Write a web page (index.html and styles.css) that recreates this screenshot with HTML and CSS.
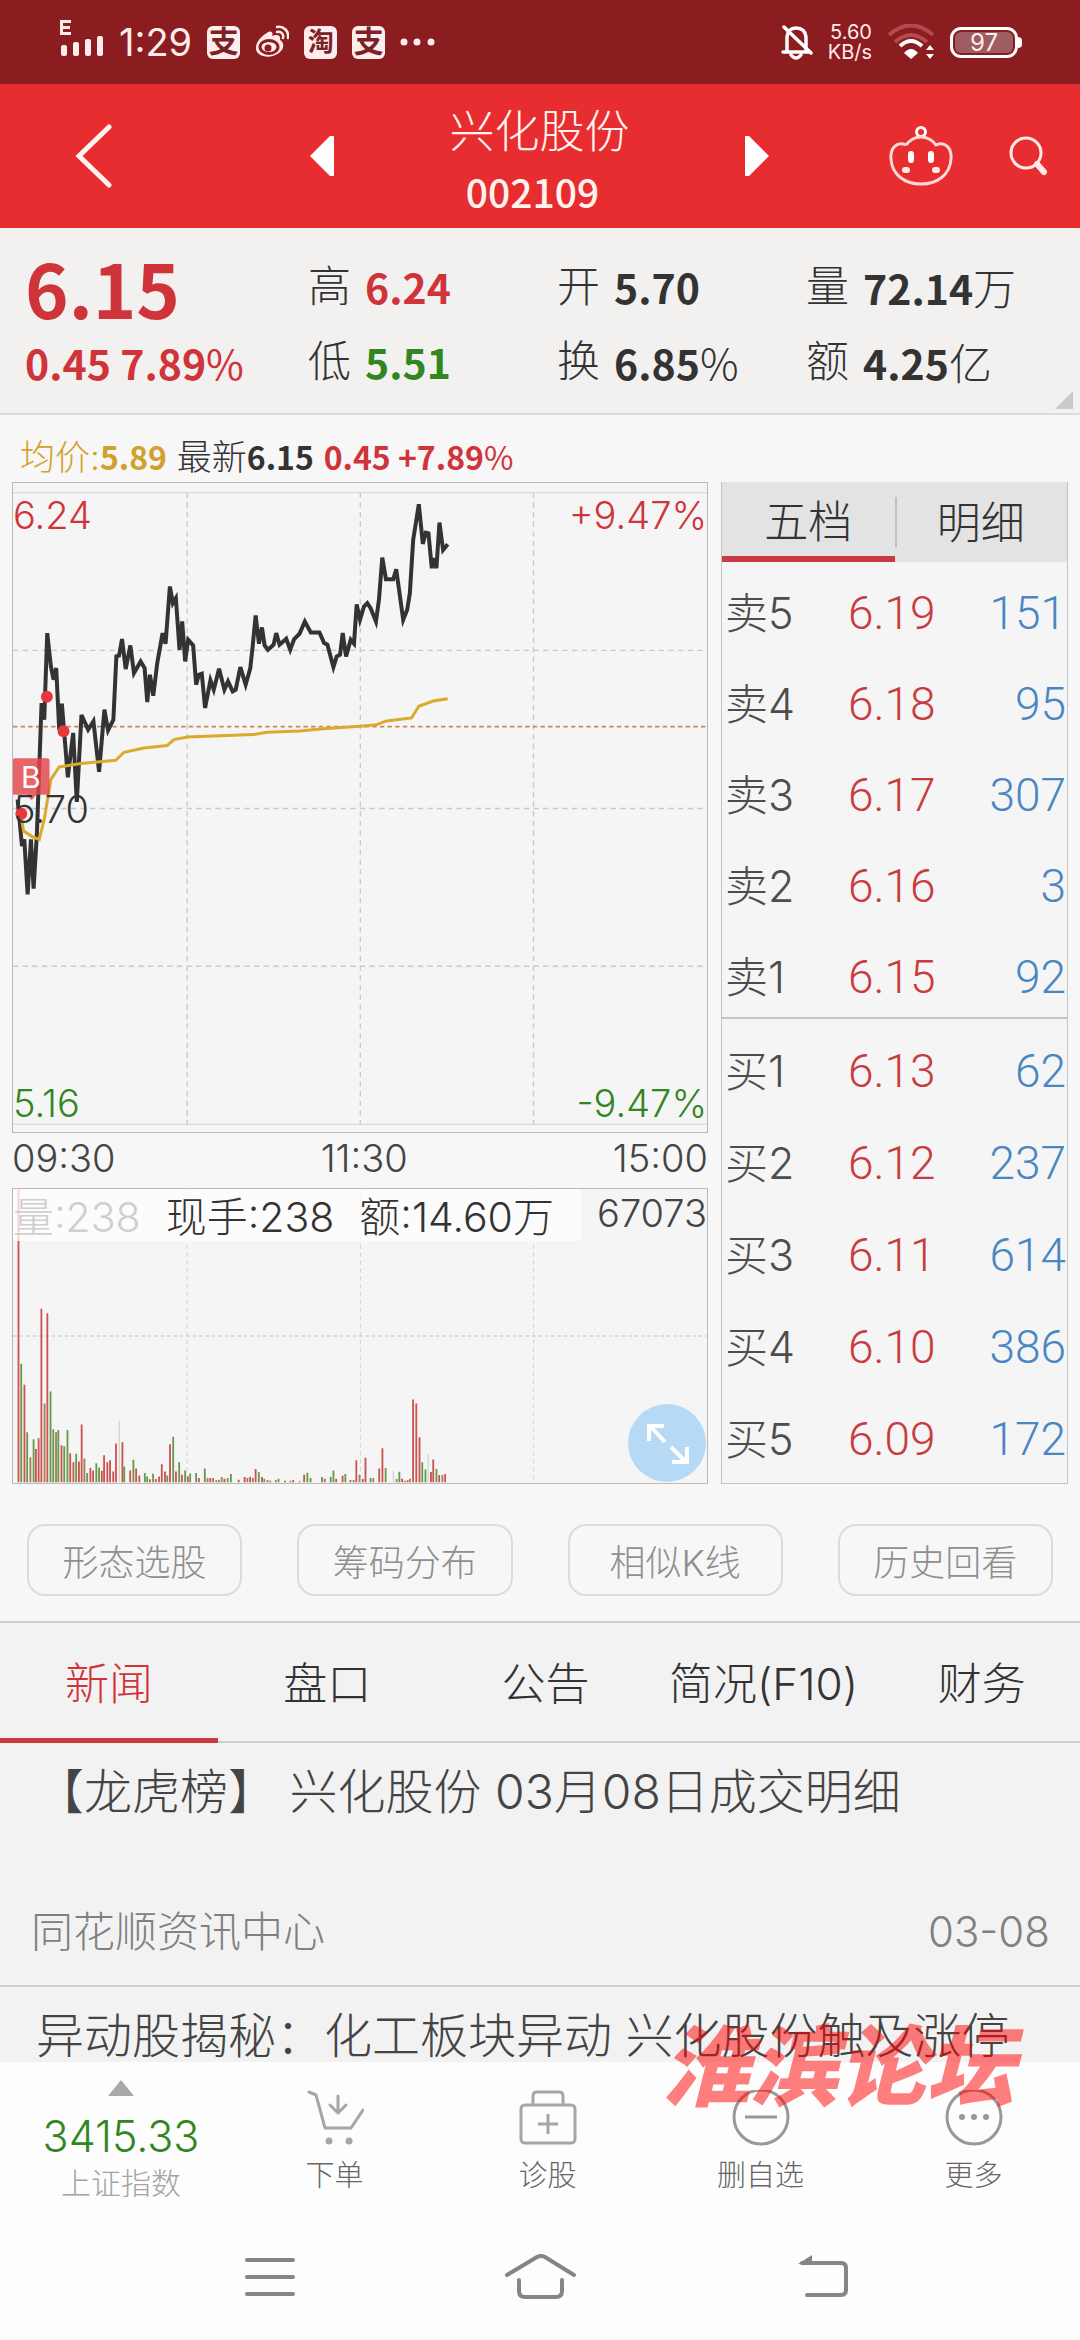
FILE: index.html
```html
<!DOCTYPE html>
<html lang="zh-CN">
<head>
<meta charset="utf-8">
<meta name="viewport" content="width=device-width">
<title>兴化股份 002109</title>
<link rel="stylesheet" href="styles.css">
</head>
<body>
<div class="app">
  <div class="status">
    <svg class="signal" viewBox="0 0 44 38" width="44" height="38" fill="#ffecec"><path d="M0 0h11v3H3v3h7v3H3v3h8v3H0z"/><rect x="1" y="25" width="6" height="11" rx="2"/><rect x="13" y="22" width="6" height="14" rx="2"/><rect x="25" y="19" width="6" height="17" rx="2"/><rect x="37" y="16" width="6" height="20" rx="2"/></svg>
    <span class="clock">1:29</span>
    <span class="app-badge">支</span>
    <svg viewBox="0 0 34 34" width="34" height="34"><path d="M12 8c3-3 7-1 5 3 5-2 9-1 8 4 5 3 4 9-1 13-7 5-18 5-22-1-4-7 4-16 10-19z" fill="#ffecec"/><ellipse cx="14" cy="22" rx="9" ry="6.500" fill="none" stroke="#8b1c1f" stroke-width="3"/><circle cx="13" cy="23" r="3.500" fill="#8b1c1f"/><path d="M22 7c4-1 7 2 6 6M22 2c7-1 12 4 11 11" fill="none" stroke="#ffecec" stroke-width="2.500" stroke-linecap="round"/></svg>
    <span class="app-badge small">淘</span>
    <span class="app-badge">支</span>
    <svg viewBox="0 0 36 8" width="36" height="8" fill="#ffecec"><circle cx="4" cy="4" r="3.500"/><circle cx="17" cy="4" r="3.500"/><circle cx="31" cy="4" r="3.500"/></svg>
    <span class="grow"></span>
    <svg viewBox="0 0 32 36" width="32" height="36" fill="none" stroke="#fff" stroke-width="3.500" stroke-linecap="round"><path d="M6 27V13Q7 4 15 4Q24 4 25 13V27M2 28H29M10 31Q15 37 20 31"/><path d="M3 3L30 29"/></svg>
    <span class="speed"><span>5.60</span><span>KB/s</span></span>
    <svg viewBox="0 0 48 36" width="48" height="36"><path d="M2 11Q24-8 46 11M8 18Q24 4 40 18" fill="none" stroke="#b5494d" stroke-width="4"/><path d="M13 22Q24 12 35 22" fill="none" stroke="#fff" stroke-width="4"/><path d="M17 29Q24 21 31 29L24 35zM43 21l4 5h-8zM43 35l4-5h-8z" fill="#fff"/></svg>
    <span class="battery">97</span>
  </div>

  <header class="header">
    <button class="icon-btn back" aria-label="返回"><svg viewBox="0 0 38 64" width="38" height="64" fill="none" stroke="#fff3f0" stroke-width="5" stroke-linecap="round"><path d="M34 3L4 32L34 61"/></svg></button>
    <div class="switcher">
      <button class="icon-btn" aria-label="上一只"><svg viewBox="0 0 24 40" width="24" height="40"><path d="M24 0V40H20L0 20L20 0z" fill="#fff"/></svg></button>
      <h1 class="stock"><span class="stock-name">兴化股份</span><span class="stock-code">002109</span></h1>
      <button class="icon-btn" aria-label="下一只"><svg viewBox="0 0 24 40" width="24" height="40"><path d="M0 0V40H4L24 20L4 0z" fill="#fff"/></svg></button>
    </div>
    <div class="tools">
      <button class="icon-btn" aria-label="智能助手"><svg viewBox="0 0 64 62" width="64" height="62" fill="none" stroke="#ffd9d6" stroke-width="3"><circle cx="32" cy="7" r="4.500" stroke="#fff" stroke-width="3"/><path d="M17 20Q23 12 32 12Q41 12 47 20C56 16 63 23 62 34C61 50 48 59 32 59C16 59 3 50 2 34C1 23 8 16 17 20"/><path d="M22 29v6M42 29v6" stroke="#fff" stroke-width="6" stroke-linecap="round"/><path d="M16 45h2M46 45h2" stroke="#ffe9e6" stroke-width="6" stroke-linecap="round"/></svg></button>
      <button class="icon-btn" aria-label="搜索"><svg viewBox="0 0 40 40" width="40" height="40" fill="none" stroke="#ffe9e6" stroke-width="3"><circle cx="18" cy="17" r="15"/><path d="M29 28L36 36" stroke-width="6" stroke-linecap="round"/></svg></button>
    </div>
  </header>

  <main class="content">
    <section class="quote">
      <div class="price-block"><strong class="price">6.15</strong><span class="num up">0.45 7.89<i>%</i></span></div>
      <dl class="stats">
        <div><dt>高</dt><dd class="up">6.24</dd></div>
        <div><dt>开</dt><dd>5.70</dd></div>
        <div><dt>量</dt><dd>72.14<i>万</i></dd></div>
        <div><dt>低</dt><dd class="down">5.51</dd></div>
        <div><dt>换</dt><dd>6.85<i>%</i></dd></div>
        <div><dt>额</dt><dd>4.25<i>亿</i></dd></div>
      </dl>
    </section>

    <p class="summary"><span class="avg">均价:<b>5.89</b></span> <span>最新<b>6.15</b></span> <b class="up">0.45 +7.89<i>%</i></b></p>

    <div class="market">
      <div class="charts">
        <div class="price-chart">
          <svg viewBox="36 9 2088 1950" preserveAspectRatio="none" fill="none">
            <g stroke="#c9c9c9" stroke-width="4" stroke-dasharray="16 13"><path d="M560 38V1936M1081 38V1936M1602 38V1936M36 512H2124M36 987H2124M36 1461H2124"/></g>
            <path d="M36 38H2124M36 1936H2124" stroke="#d2d2d2" stroke-width="3"/>
            <path d="M36 741H2124" stroke="#c98a5a" stroke-width="5" stroke-dasharray="13 10"/>
            <polyline stroke="#333" stroke-width="12" points="50,960 63,1100 70,1080 80,1245 90,1080 98,1228 108,1060 122,670 130,720 139,460 150,560 158,600 166,565 175,750 183,672 201,893 217,760 228,967 242,706 262,750 278,725 295,877 311,690 322,752 338,720 347,530 355,528 364,478 375,568 389,497 400,580 420,545 432,565 440,667 448,585 458,648 470,550 486,460 495,492 508,320 517,370 526,355 537,510 545,425 554,545 563,480 578,497 587,615 595,585 604,582 614,685 630,602 640,630 656,567 672,630 683,605 697,635 706,630 720,562 736,615 750,565 757,500 766,407 776,492 785,443 793,497 803,510 820,495 828,460 838,495 858,477 870,510 882,478 898,462 914,425 932,458 958,458 972,490 982,495 1000,562 1010,530 1020,525 1028,460 1038,530 1052,480 1062,492 1070,374 1080,420 1092,380 1102,370 1112,385 1128,425 1137,360 1147,233 1158,298 1180,298 1189,268 1210,420 1222,390 1230,340 1240,180 1257,73 1269,192 1278,158 1286,160 1296,265 1302,235 1310,265 1319,128 1330,210 1344,193"/>
            <polyline stroke="#dba92c" stroke-width="9" points="58,1000 68,1055 95,1072 115,1080 130,1020 150,900 175,862 240,852 345,842 370,818 430,805 500,798 520,780 560,772 760,765 800,758 900,754 960,748 1080,740 1130,735 1160,724 1235,715 1257,680 1300,664 1344,657"/>
            <g fill="#e8363d"><circle cx="138" cy="651" r="18"/><circle cx="188" cy="755" r="18"/><circle cx="61" cy="1003" r="18"/></g>
            <path d="M42 836H138q8 0 8 8V938q0 8-8 8H106L92 962L78 946H42q-8 0-8-8V844q0-8 8-8z" fill="#e4454b" fill-opacity=".82"/>
          </svg>
          <span class="tag tag-tl up">6.24</span>
          <span class="tag tag-tr up">+9.47%</span>
          <span class="tag tag-mid">5.70</span>
          <span class="tag tag-bl down">5.16</span>
          <span class="tag tag-br down">-9.47%</span>
          <span class="buy-mark">B</span>
        </div>
        <div class="times"><span>09:30</span><span>11:30</span><span>15:00</span></div>
        <div class="volume-chart">
          <svg viewBox="26 327 1516 888" preserveAspectRatio="none" fill="none">
            <path d="M406 327V1213M785 327V1213M1163 327V1213" stroke="#c9c9c9" stroke-width="2" stroke-dasharray="13 11"/>
            <path d="M26 771H1542" stroke="#d2d2d2" stroke-width="4" stroke-dasharray="8 6"/>
            <path stroke="#cd5252" stroke-width="4" d="M38 1213V327M51 1213V918M76 1213V1112M82 1213V1080M88 1213V689M101 1213V702M132 1213V1101M151 1213V1125M158 1213V1152M170 1213V1150M176 1213V1038M195 1213V1170M201 1213V1177M220 1213V1178M225 1213V1131M232 1213V1152M238 1213V1146M245 1213V1180M251 1213V1096M265 1213V1092M282 1213V1177M295 1213V1171M302 1213V1192M325 1213V1204M338 1213V1203M345 1213V1195M351 1213V1158M358 1213V1180M369 1213V1098M382 1213V1180M395 1213V1190M408 1213V1195M432 1213V1200M457 1213V1200M470 1213V1207M488 1213V1202M519 1213V1205M532 1213V1197M544 1213V1196M556 1213V1173M570 1213V1197M588 1213V1208M620 1213V1208M638 1213V1206M662 1213V1190M707 1213V1202M732 1213V1202M746 1213V1193M763 1213V1206M776 1213V1146M790 1213V1203M796 1213V1139M826 1213V1171M833 1213V1110M876 1213V1202M888 1213V1207M900 1213V963M907 1213V975M914 1213V1077M939 1213V1182M944 1213V1144M957 1213V1191M970 1213V1188"/>
            <path stroke="#659a4b" stroke-width="4" d="M44 1213V855M57 1213V1062M71 1213V1083M108 1213V939M114 1213V1053M125 1213V1055M138 1213V1104M145 1213V1055M164 1213V1127M188 1213V1185M208 1213V1155M214 1213V1168M269 1213V1165M289 1213V1145M314 1213V1185M319 1213V1195M332 1213V1187M363 1213V1192M376 1213V1075M389 1213V1152M402 1213V1177M413 1213V1186M426 1213V1185M445 1213V1171M476 1213V1205M495 1213V1200M502 1213V1188M563 1213V1182M582 1213V1206M606 1213V1202M669 1213V1184M676 1213V1200M701 1213V1197M720 1213V1196M726 1213V1177M752 1213V1188M807 1213V1200M840 1213V1170M870 1213V1181M920 1213V1152M927 1213V1174M951 1213V1173"/>
            <path stroke="#a57e55" stroke-width="4" d="M64 1213V1137M95 1213V975M120 1213V1062M182 1213V1141M451 1213V1200M463 1213V1200M482 1213V1197M538 1213V1200M550 1213V1200M575 1213V1202M600 1213V1206M632 1213V1208M652 1213V1210M770 1213V1206M783 1213V1190M813 1213V1200M864 1213V1203M882 1213V1208M893 1213V1202M964 1213V1191"/>
            <path stroke="#d5d5d5" stroke-width="3" d="M258 1213V1028M933 1213V1127M857 1213V1180"/>
          </svg>
          <p class="volume-info"><span class="faded">量:238</span><span>现手:238</span><span>额:14.60万</span></p>
          <span class="volume-max">67073</span>
          <button class="expand" aria-label="全屏"><svg viewBox="0 0 78 78" width="78" height="78" fill="none" stroke="#fff" stroke-width="4"><path d="M37 38L22 22M21 37V22H36M43 43L58 58M59 43V58H44"/></svg></button>
        </div>
      </div>

      <div class="book">
        <div class="book-tabs"><button class="book-tab active">五档</button><button class="book-tab">明细</button></div>
        <table>
          <tbody>
            <tr><th>卖5</th><td>6.19</td><td>151</td></tr>
            <tr><th>卖4</th><td>6.18</td><td>95</td></tr>
            <tr><th>卖3</th><td>6.17</td><td>307</td></tr>
            <tr><th>卖2</th><td>6.16</td><td>3</td></tr>
            <tr><th>卖1</th><td>6.15</td><td>92</td></tr>
          </tbody>
          <tbody class="bids">
            <tr><th>买1</th><td>6.13</td><td>62</td></tr>
            <tr><th>买2</th><td>6.12</td><td>237</td></tr>
            <tr><th>买3</th><td>6.11</td><td>614</td></tr>
            <tr><th>买4</th><td>6.10</td><td>386</td></tr>
            <tr><th>买5</th><td>6.09</td><td>172</td></tr>
          </tbody>
        </table>
      </div>
    </div>

    <div class="pills"><button>形态选股</button><button>筹码分布</button><button>相似K线</button><button>历史回看</button></div>

    <nav class="tabs"><a href="#news" class="active">新闻</a><a href="#pankou">盘口</a><a href="#notice">公告</a><a href="#f10">简况(F10)</a><a href="#finance">财务</a></nav>

    <article class="news" id="news">
      <h2>【龙虎榜】 兴化股份 03月08日成交明细</h2>
      <p class="meta"><span>同花顺资讯中心</span><time>03-08</time></p>
    </article>
    <article class="news"><h2>异动股揭秘：化工板块异动 兴化股份触及涨停</h2></article>
  </main>

  <footer class="toolbar">
    <button class="index"><svg viewBox="0 0 26 16" width="26" height="16"><path d="M13 0L26 16H0z" fill="#a9a9a9"/></svg><span class="index-value down">3415.33</span><span class="index-name">上证指数</span></button>
    <button class="action"><svg viewBox="0 0 58 64" width="58" height="64" fill="none" stroke="#a6a6a6" stroke-width="3" stroke-linecap="round" stroke-linejoin="round"><path d="M3 2L10 5L19 38H45L57 20M32 6V22M24 15L32 23L40 15"/><g fill="#a6a6a6" stroke="none"><circle cx="23" cy="51" r="3.500"/><circle cx="43" cy="51" r="3.500"/></g></svg><span>下单</span></button>
    <button class="action"><svg viewBox="0 0 58 64" width="58" height="64" fill="none" stroke="#a6a6a6" stroke-width="3"><rect x="2" y="15" width="54" height="38" rx="4"/><path d="M14 15V6q0-4 4-4H40q4 0 4 4V15M29 24V44M19 34H39"/></svg><span>诊股</span></button>
    <button class="action"><svg viewBox="0 0 58 64" width="58" height="64" fill="none" stroke="#999" stroke-width="3"><circle cx="29" cy="27" r="27"/><path d="M13 27H45"/></svg><span>删自选</span></button>
    <button class="action"><svg viewBox="0 0 58 64" width="58" height="64" fill="none" stroke="#999" stroke-width="3"><circle cx="29" cy="27" r="27"/><g fill="#999" stroke="none"><circle cx="17" cy="27" r="3"/><circle cx="29" cy="27" r="3"/><circle cx="41" cy="27" r="3"/></g></svg><span>更多</span></button>
    <span class="watermark">淮滨论坛</span>
  </footer>

  <div class="system-nav">
    <button class="icon-btn" aria-label="菜单"><svg viewBox="0 0 80 48" width="80" height="48" stroke="#858585" stroke-width="4" stroke-linecap="round"><path d="M17 7H63M17 24H63M17 41H63"/></svg></button>
    <button class="icon-btn" aria-label="主页"><svg viewBox="0 0 80 48" width="80" height="48" fill="none" stroke="#858585" stroke-width="4" stroke-linecap="round"><path d="M7 22L37 4Q41 2 45 4L74 22M19 27V38Q19 44 25 44H56Q62 44 62 38V27"/></svg></button>
    <button class="icon-btn" aria-label="返回"><svg viewBox="0 0 80 48" width="80" height="48" fill="none" stroke="#858585" stroke-width="4" stroke-linecap="round"><path d="M32 10H71Q76 10 76 15V37Q76 42 71 42H37"/><path d="M28 11L42 2V12z" fill="#858585" stroke="none"/></svg></button>
  </div>
</div>
</body>
</html>
```
FILE: styles.css
```css
* { box-sizing: border-box; }

body {
  margin: 0;
  background: #fdfdfd;
  color: #333;
  font-family: Inter, "Noto Sans CJK SC", sans-serif;
  font-weight: 300;
}

button {
  margin: 0;
  padding: 0;
  border: 0;
  background: none;
  color: inherit;
  font: inherit;
}

svg { display: block; flex: none; }
h1, h2, p, dl, dd { margin: 0; font-weight: 300; }
a { color: inherit; text-decoration: none; }
i { font-style: normal; font-weight: 400; }

.app { display: flex; flex-direction: column; height: 100vh; }
.grow { flex: 1; }
.up { color: #cf343a; }
.down { color: #33861f; }
.icon-btn { display: flex; align-items: center; justify-content: center; }

/* Status bar */
.status {
  display: flex;
  align-items: center;
  gap: 15px;
  height: 84px;
  flex: none;
  padding: 0 62px 0 60px;
  background: #8b1c1f;
  color: #ffecec;
}
.signal { margin-top: -6px; }
.clock { font-size: 38px; font-weight: 400; line-height: 48px; }
.app-badge {
  width: 33px;
  height: 33px;
  border-radius: 6px;
  background: #ffecec;
  color: #7a2225;
  font-size: 30px;
  font-weight: 700;
  line-height: 31px;
  text-align: center;
}
.app-badge.small { font-size: 26px; }
.speed {
  display: flex;
  flex-direction: column;
  align-items: flex-end;
  font-size: 20px;
  font-weight: 400;
  line-height: 20px;
}
.battery {
  position: relative;
  width: 68px;
  height: 31px;
  border: 3px solid #fff;
  border-radius: 11px;
  background: #9e5d61;
  box-shadow: inset 0 0 0 2px #8b1c1f;
  font-size: 24px;
  font-weight: 400;
  line-height: 26px;
  text-align: center;
}
.battery::after {
  content: "";
  position: absolute;
  top: 7px;
  right: -7px;
  width: 4px;
  height: 11px;
  border-radius: 0 4px 4px 0;
  background: #fff;
}

/* Title bar */
.header {
  display: grid;
  grid-template-columns: 235px 1fr 279px;
  align-items: center;
  height: 144px;
  flex: none;
  padding: 0 32px 0 75px;
  background: #e82d30;
  color: #fff3f0;
}
.back { justify-content: flex-start; }
.switcher { display: flex; align-items: center; justify-content: space-between; }
.stock { display: flex; flex-direction: column; align-items: center; padding-top: 8px; }
.stock-name { font-size: 45px; line-height: 62px; }
.stock-code {
  padding-right: 14px;
  font-family: "Noto Sans CJK SC", sans-serif;
  font-size: 39px;
  font-weight: 500;
  line-height: 56px;
}
.tools { display: flex; align-items: center; justify-content: flex-end; gap: 55px; }

/* Quote summary */
.content { flex: 1; min-height: 0; overflow: hidden; background: #f7f7f7; }
.quote {
  position: relative;
  display: grid;
  grid-template-columns: 283px 1fr;
  height: 187px;
  padding: 20px 0 0 25px;
  border-bottom: 2px solid #dcdbda;
  background: #f2f1ef;
}
.quote::after {
  content: "";
  position: absolute;
  right: 7px;
  bottom: 4px;
  border: solid transparent;
  border-width: 9px;
  border-right-color: #cbcac9;
  border-bottom-color: #cbcac9;
}
.price-block { display: flex; flex-direction: column; }
.price, .num, .stats dd, .summary b { font-family: "Noto Sans CJK SC", sans-serif; font-weight: 700; }
.price { color: #cf343a; font-size: 74px; line-height: 78px; }
.num { font-size: 41px; line-height: 72px; }
.stats { display: grid; grid-template-columns: 249px 249px 1fr; grid-auto-rows: 75px; }
.stats div { display: flex; gap: 14px; font-size: 43px; line-height: 76px; }
.stats dt, .stats i { font-weight: 300; }
.stats dd { font-size: 41px; }
.stats dd i { font-size: 43px; }

.summary { height: 67px; padding: 8px 20px 0; font-size: 35px; line-height: 66px; }
.summary b { font-size: 32px; }
.avg { color: #d3a02d; }

/* Charts and order book */
.market { display: grid; grid-template-columns: 696px 1fr; gap: 13px; padding: 0 12px; }
.price-chart { position: relative; height: 651px; border: 1px solid #b9b9b9; background: #f5f5f5; }
.price-chart svg, .volume-chart > svg { width: 100%; height: 100%; }
.tag, .volume-max { position: absolute; font-size: 38px; line-height: 48px; }
.tag-tl { top: 8px; left: 0; }
.tag-tr { top: 8px; right: 0; }
.tag-mid { top: 302px; left: 0; }
.tag-bl { bottom: 5px; left: 0; }
.tag-br { bottom: 5px; right: 0; }
.buy-mark { position: absolute; top: 276px; left: 8px; color: #fff; font-size: 30px; font-weight: 400; line-height: 36px; }
.times { display: flex; justify-content: space-between; height: 55px; color: #444; font-size: 38px; line-height: 50px; }
.volume-chart { position: relative; height: 296px; border: 1px solid #b9b9b9; background: #f5f5f5; }
.volume-info {
  position: absolute;
  top: 0;
  left: 0;
  display: flex;
  gap: 25px;
  width: 568px;
  height: 52px;
  background: rgba(253, 253, 253, .75);
  font-size: 41px;
  line-height: 57px;
  white-space: nowrap;
}
.faded { color: #cfcfcf; }
.volume-max { top: 0; right: 0; color: #444; }
.expand {
  position: absolute;
  right: 1px;
  bottom: 1px;
  border-radius: 50%;
  background: #b6daf5;
}

.book { border: 1px solid #c4c4c4; border-top: 0; background: #f5f5f5; }
.book-tabs { display: flex; height: 80px; background: #e3e3e3; }
.book-tab { position: relative; flex: 1; padding-bottom: 4px; font-size: 44px; }
.book-tab.active { border-bottom: 6px solid #c93b40; padding-bottom: 0; }
.book-tab + .book-tab::before { content: ""; position: absolute; top: 15px; left: 0; width: 2px; height: 50px; background: #c0c0c0; }
.book table { width: 100%; border-collapse: collapse; table-layout: fixed; }
.book th, .book td { height: 91px; padding: 12px 0 0; font-size: 46px; font-weight: 300; line-height: 79px; text-align: right; }
.book th { width: 82px; padding-left: 3px; color: #4d4d4d; font-size: 43px; text-align: left; }
.book td { color: #c93b40; font-family: Roboto, sans-serif; }
.book td + td { padding-right: 1px; color: #4a87c2; }
.book .bids { border-top: 2px solid #c4c4c4; }
.book .bids th, .book .bids td { height: 92px; padding-top: 13px; }

/* Shortcuts */
.pills { display: grid; grid-template-columns: repeat(4, 1fr); gap: 55px; padding: 40px 27px 25px; }
.pills button { height: 72px; border: 2px solid #dbdbdb; border-radius: 18px; color: #8f8f8f; font-size: 36px; }

/* Section tabs: the strip is slightly wider than the screen */
.tabs { display: grid; grid-template-columns: repeat(5, 20.2%); height: 122px; border-top: 2px solid #cfcfcf; border-bottom: 2px solid #cfcfcf; background: #f2f2f2; }
.tabs a { height: 120px; font-size: 44px; line-height: 123px; text-align: center; white-space: nowrap; }
.tabs .active { border-bottom: 5px solid #c93b40; color: #cf343a; }

.news { height: 244px; padding: 25px 30px 0 36px; border-bottom: 2px solid #cfcfcf; background: #f2f2f2; }
.news h2 { color: #444; font-size: 48px; line-height: 48px; white-space: nowrap; }
.meta { display: flex; justify-content: space-between; margin: 88px 0 0 -5px; color: #808080; font-size: 42px; line-height: 56px; }

/* Bottom bars */
.toolbar { position: relative; display: grid; grid-template-columns: 228px repeat(4, 1fr); height: 151px; flex: none; background: #fdfdfd; }
.toolbar button { display: flex; flex-direction: column; align-items: center; }
.index { padding: 18px 0 0 14px; }
.index-value { padding-top: 15px; font-size: 43px; line-height: 50px; }
.index-name { color: #a3a3a3; font-size: 30px; line-height: 44px; }
.action { padding-top: 28px; color: #666; font-size: 29px; line-height: 44px; }
.watermark {
  position: absolute;
  right: 66px;
  bottom: 86px;
  color: rgba(255, 0, 0, .5);
  font-size: 88px;
  font-style: italic;
  font-weight: 900;
  line-height: 120px;
}

.system-nav { display: grid; grid-template-columns: repeat(3, 1fr); align-items: center; height: 127px; flex: none; padding: 0 135px; }
```
